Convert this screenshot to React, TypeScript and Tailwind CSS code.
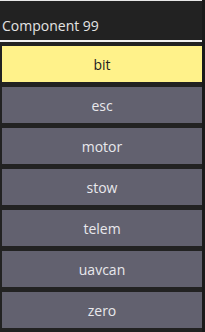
import React from 'react';

const items = ['bit', 'esc', 'motor', 'stow', 'telem', 'uavcan', 'zero'];

export default function App() {
  const active = 'bit';
  return (
    <div
      className="flex h-[332px] w-[205px] bg-[#222222] overflow-hidden"
      style={{ fontFamily: '"Open Sans", "Noto Sans", sans-serif' }}
    >
      <div className="flex w-[202px] flex-col">
        <div className="h-px w-full bg-[#e8e8e8]" />
        <div className="flex h-[39px] items-end pb-[7px] pl-[2px] text-[14px] leading-none text-[#e4e4e4]">
          Component 99
        </div>
        <div className="h-[2px] w-full bg-[#f0f0f0]" />
        <div className="mt-[4px] flex flex-col gap-[5px] pl-[2px]">
          {items.map((name) => (
            <button
              key={name}
              className={`flex h-[36px] w-[200px] items-center justify-center text-[14px] ${
                name === active ? 'bg-[#fff28a] text-[#222222]' : 'bg-[#62616f] text-[#e8e8ec]'
              }`}
            >
              {name}
            </button>
          ))}
        </div>
      </div>
      <div className="w-[3px] bg-[#1a1a1a]" />
    </div>
  );
}
